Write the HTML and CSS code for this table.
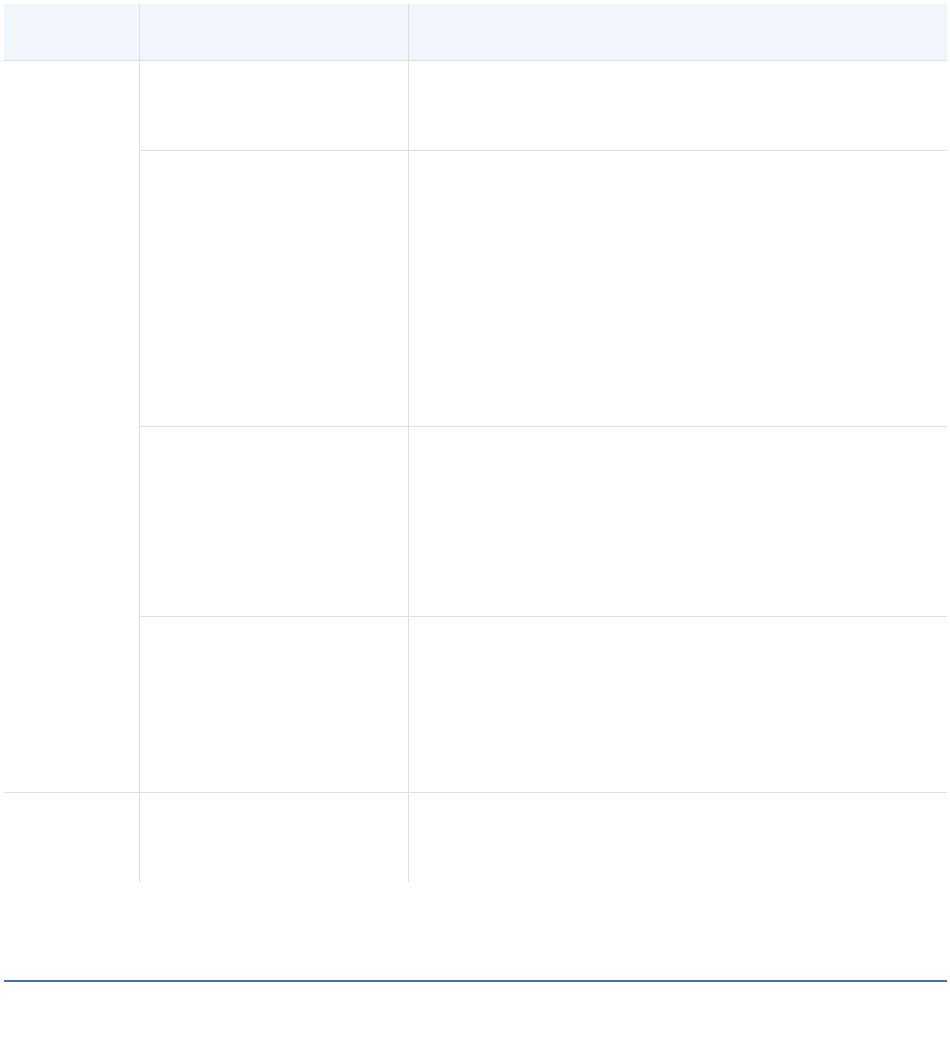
FILE: index.html
```html
<!DOCTYPE html>
<html lang="en">
<head>
    <meta charset="UTF-8">
    <meta name="viewport" content="width=device-width, initial-scale=1.0">
    <title>Table</title>
    <link rel="stylesheet" href="styles.css">
</head>
<body>

    <!-- Data table (empty cells) -->
    <div class="data-table">
        <div class="cell head c1"></div>
        <div class="cell head c2"></div>
        <div class="cell head c3"></div>

        <div class="cell group c1"></div>
        <div class="cell r1 c2"></div>
        <div class="cell r1 c3"></div>
        <div class="cell r2 c2"></div>
        <div class="cell r2 c3"></div>
        <div class="cell r3 c2"></div>
        <div class="cell r3 c3"></div>
        <div class="cell r4 c2"></div>
        <div class="cell r4 c3"></div>

        <div class="cell last c1"></div>
        <div class="cell last c2"></div>
        <div class="cell last c3"></div>
    </div>

    <!-- Footer rule -->
    <div class="footer-rule"></div>

</body>
</html>
```

FILE: styles.css
```css
/* General Styles */
body {
    font-family: "Liberation Sans", Arial, sans-serif;
    margin: 0;
    padding: 4px 0 0 4px;
    background-color: #ffffff;
}

/* Table grid */
.data-table {
    display: grid;
    width: 943px;
    grid-template-columns: 136px 269px 538px;
    grid-template-rows: 57px 90px 276px 190px 176px 89px;
}

.cell {
    box-sizing: border-box;
    border-bottom: 1px solid #e0dfda;
}

.c1,
.c2 {
    border-right: 1px solid #e0dfda;
}

.c1 { grid-column: 1; }
.c2 { grid-column: 2; }
.c3 { grid-column: 3; }

.head {
    grid-row: 1;
    background: #f1f6fd;
}

.group { grid-row: 2 / 6; }
.r1 { grid-row: 2; }
.r2 { grid-row: 3; }
.r3 { grid-row: 4; }
.r4 { grid-row: 5; }

.last {
    grid-row: 6;
    border-bottom: none;
}

/* Footer rule */
.footer-rule {
    width: 943px;
    height: 2px;
    margin-top: 98px;
    background: #4a6ca6;
}
```
